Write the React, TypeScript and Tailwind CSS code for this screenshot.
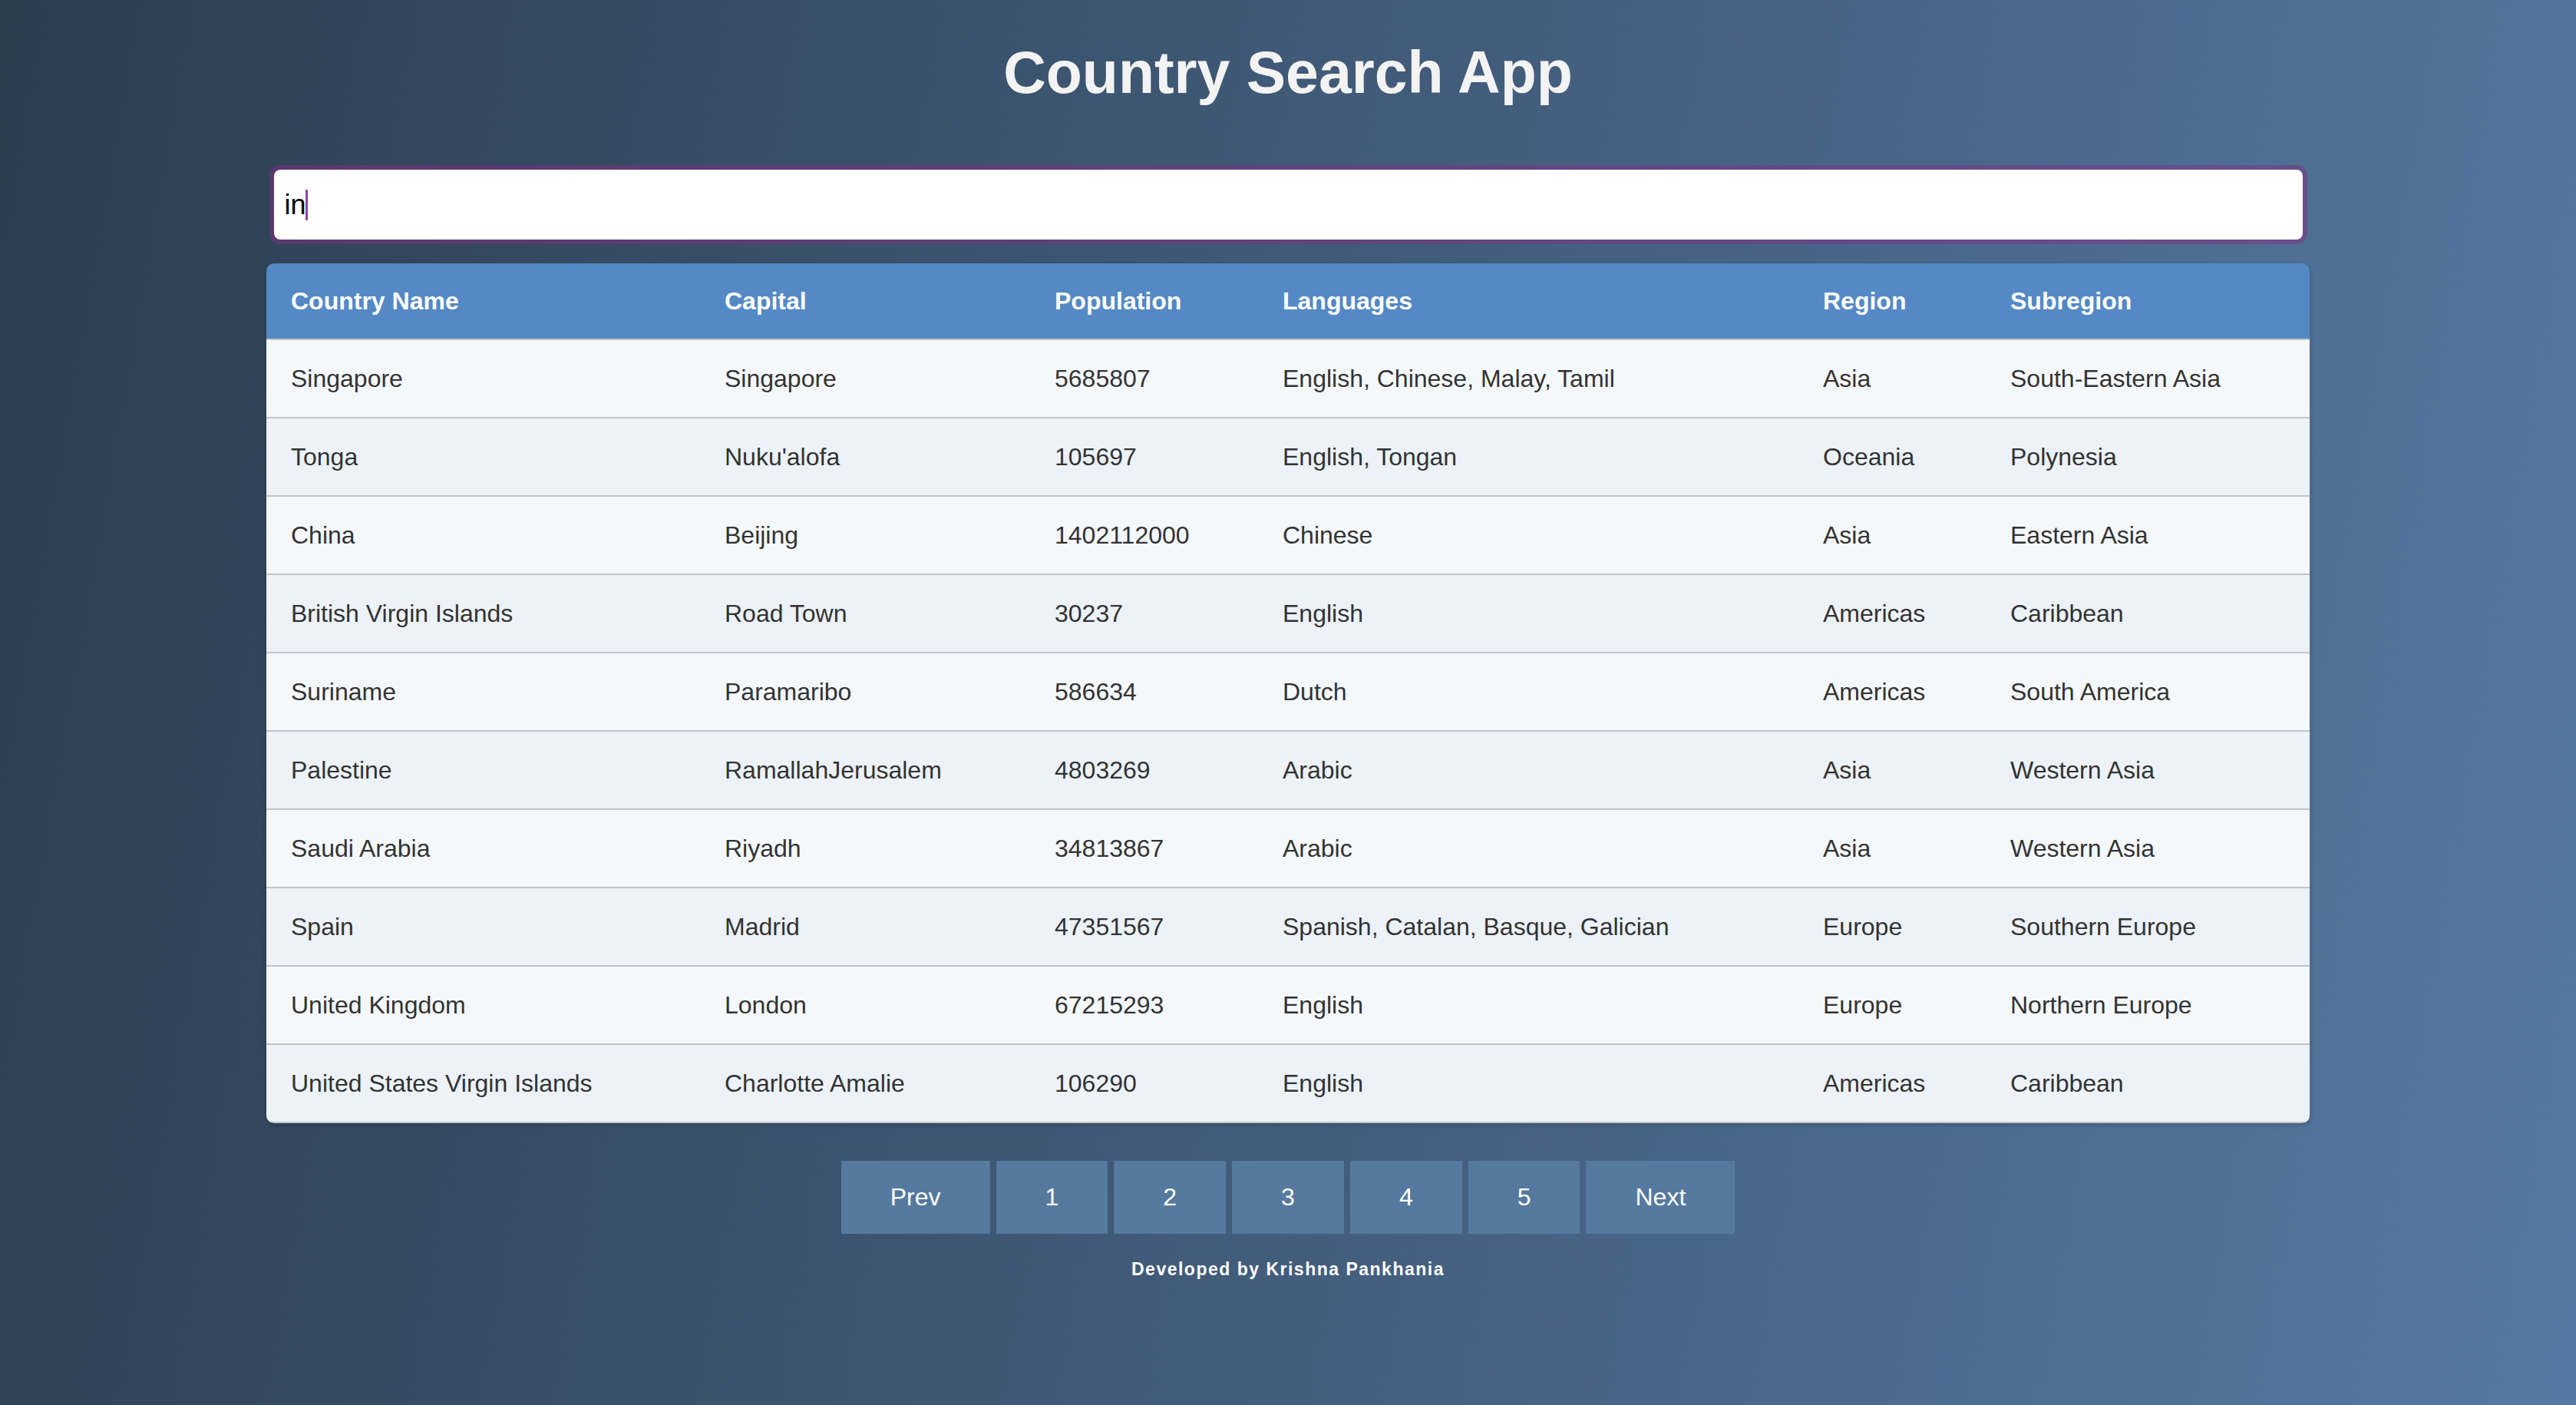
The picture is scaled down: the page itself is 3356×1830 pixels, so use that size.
import { useState } from 'react';

type Country = {
  name: string;
  capital: string;
  population: number;
  languages: string;
  region: string;
  subregion: string;
};

const countries: Country[] = [
  { name: 'Singapore', capital: 'Singapore', population: 5685807, languages: 'English, Chinese, Malay, Tamil', region: 'Asia', subregion: 'South-Eastern Asia' },
  { name: 'Tonga', capital: "Nuku'alofa", population: 105697, languages: 'English, Tongan', region: 'Oceania', subregion: 'Polynesia' },
  { name: 'China', capital: 'Beijing', population: 1402112000, languages: 'Chinese', region: 'Asia', subregion: 'Eastern Asia' },
  { name: 'British Virgin Islands', capital: 'Road Town', population: 30237, languages: 'English', region: 'Americas', subregion: 'Caribbean' },
  { name: 'Suriname', capital: 'Paramaribo', population: 586634, languages: 'Dutch', region: 'Americas', subregion: 'South America' },
  { name: 'Palestine', capital: 'RamallahJerusalem', population: 4803269, languages: 'Arabic', region: 'Asia', subregion: 'Western Asia' },
  { name: 'Saudi Arabia', capital: 'Riyadh', population: 34813867, languages: 'Arabic', region: 'Asia', subregion: 'Western Asia' },
  { name: 'Spain', capital: 'Madrid', population: 47351567, languages: 'Spanish, Catalan, Basque, Galician', region: 'Europe', subregion: 'Southern Europe' },
  { name: 'United Kingdom', capital: 'London', population: 67215293, languages: 'English', region: 'Europe', subregion: 'Northern Europe' },
  { name: 'United States Virgin Islands', capital: 'Charlotte Amalie', population: 106290, languages: 'English', region: 'Americas', subregion: 'Caribbean' },
];

const columns = ['Country Name', 'Capital', 'Population', 'Languages', 'Region', 'Subregion'];
const colWidths = ['w-[565px]', 'w-[430px]', 'w-[297px]', 'w-[704px]', 'w-[244px]', 'w-[422px]'];

export default function App() {
  const [searchTerm, setSearchTerm] = useState('in');
  const [currentPage, setCurrentPage] = useState(1);

  return (
    <div className="min-h-screen bg-[linear-gradient(100deg,#2c3e50,#5679a3)] pt-[50px] flex flex-col items-center font-['Liberation_Sans',Arial,sans-serif]">
      <h1 className="text-[77px] leading-[88px] font-bold text-[#f3f3f3]">Country Search App</h1>

      {/* Search */}
      <div className="relative mt-[77px] w-[2655px] h-[103px] bg-white bg-clip-padding border-[6px] border-[rgba(130,45,130,0.5)] rounded-[14px]">
        <input
          type="text"
          value={searchTerm}
          onChange={(e) => setSearchTerm(e.target.value)}
          className="w-full h-full bg-transparent pl-[14px] text-[36px] text-black outline-none caret-transparent rounded-[8px]"
        />
        <span className="absolute left-[41px] top-1/2 -translate-y-1/2 h-[40px] w-[3px] bg-[#8e44ad]" />
      </div>

      {/* Table */}
      <div className="mt-[25px] w-[2662px] rounded-[10px] overflow-hidden shadow-[0_2px_6px_rgba(0,0,0,0.2)]">
        <table className="w-full table-fixed border-collapse text-left">
          <colgroup>
            {colWidths.map((w) => (
              <col key={w} className={w} />
            ))}
          </colgroup>
          <thead>
            <tr className="bg-[#5489c5]">
              {columns.map((c) => (
                <th key={c} className="px-[32px] py-[31px] leading-[36px] text-[32px] font-bold text-white border-b-2 border-[#c2c4c6]">
                  {c}
                </th>
              ))}
            </tr>
          </thead>
          <tbody>
            {countries.map((c, i) => (
              <tr key={c.name} className={i % 2 === 0 ? 'bg-[#f5f8fb]' : 'bg-[#ecf2f8]'}>
                <td className="px-[32px] py-[32px] leading-[36px] text-[32px] text-[#333] border-b-2 border-[#c2c4c6]">{c.name}</td>
                <td className="px-[32px] py-[32px] leading-[36px] text-[32px] text-[#333] border-b-2 border-[#c2c4c6]">{c.capital}</td>
                <td className="px-[32px] py-[32px] leading-[36px] text-[32px] text-[#333] border-b-2 border-[#c2c4c6]">{c.population}</td>
                <td className="px-[32px] py-[32px] leading-[36px] text-[32px] text-[#333] border-b-2 border-[#c2c4c6]">{c.languages}</td>
                <td className="px-[32px] py-[32px] leading-[36px] text-[32px] text-[#333] border-b-2 border-[#c2c4c6]">{c.region}</td>
                <td className="px-[32px] py-[32px] leading-[36px] text-[32px] text-[#333] border-b-2 border-[#c2c4c6]">{c.subregion}</td>
              </tr>
            ))}
          </tbody>
        </table>
      </div>

      {/* Pagination */}
      <div className="mt-[49px] flex gap-[8px]">
        <button
          onClick={() => setCurrentPage(Math.max(1, currentPage - 1))}
          className="px-[64px] py-[29px] leading-[37px] text-[32px] text-white bg-[#56799f]"
        >
          Prev
        </button>
        {[1, 2, 3, 4, 5].map((p) => (
          <button
            key={p}
            onClick={() => setCurrentPage(p)}
            className="px-[64px] py-[29px] leading-[37px] text-[32px] text-white bg-[#56799f]"
          >
            {p}
          </button>
        ))}
        <button
          onClick={() => setCurrentPage(Math.min(5, currentPage + 1))}
          className="px-[64px] py-[29px] leading-[37px] text-[32px] text-white bg-[#56799f]"
        >
          Next
        </button>
      </div>

      <p className="mt-[32px] text-[23px] leading-[28px] font-bold tracking-[1.5px] text-white">
        Developed by Krishna Pankhania
      </p>
    </div>
  );
}
